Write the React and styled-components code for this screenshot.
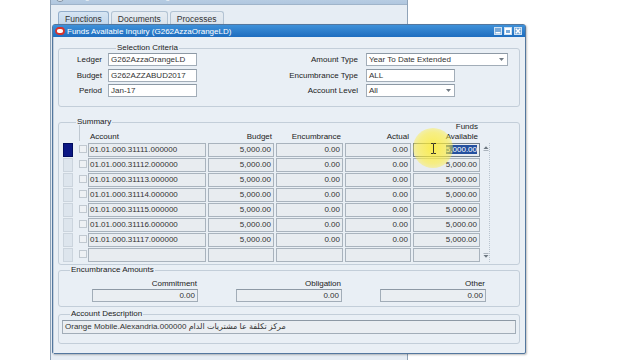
import React from "react";
import styled, { createGlobalStyle } from "styled-components";

const GlobalStyle = createGlobalStyle`
  html, body {
    margin: 0;
    padding: 0;
    background: #fff;
  }
  body {
    font-family: "Liberation Sans", "DejaVu Sans", Arial, sans-serif;
  }
`;

const accounts = [
  "01.01.000.31111.000000",
  "01.01.000.31112.000000",
  "01.01.000.31113.000000",
  "01.01.000.31114.000000",
  "01.01.000.31115.000000",
  "01.01.000.31116.000000",
  "01.01.000.31117.000000",
  "",
];

const App = () => {
  return (
    <>
      <GlobalStyle />
      <Desktop>
        <BackWindow>
          <BackTitleBar>
            <BackTitleIcon />
            <BackTitleText>Navigator - G262AzzaOrangeLD Admin</BackTitleText>
          </BackTitleBar>
          <Tabs>
            <Tab $active>Functions</Tab>
            <Tab>Documents</Tab>
            <Tab>Processes</Tab>
          </Tabs>
        </BackWindow>

        <FrontWindow>
          <TitleBar>
            <svg width="10" height="8" viewBox="0 0 10 8">
              <rect x="1" y="1" width="8" height="6" rx="3" fill="#fff" stroke="#d8322b" strokeWidth="1.8" />
            </svg>
            <TitleText>Funds Available Inquiry (G262AzzaOrangeLD)</TitleText>
            <WinButtons>
              <WinButton>
                <svg width="6" height="6" viewBox="0 0 6 6">
                  <rect x="0.5" y="4" width="5" height="1.5" fill="#fff" />
                </svg>
              </WinButton>
              <WinButton>
                <svg width="6" height="6" viewBox="0 0 6 6">
                  <rect x="0.5" y="0.5" width="5" height="5" fill="none" stroke="#fff" strokeWidth="1" />
                  <rect x="0.5" y="0.5" width="5" height="1.5" fill="#fff" />
                </svg>
              </WinButton>
              <WinButton>
                <svg width="6" height="6" viewBox="0 0 6 6">
                  <path d="M0.8 0.8 L5.2 5.2 M5.2 0.8 L0.8 5.2" stroke="#fff" strokeWidth="1.4" />
                </svg>
              </WinButton>
            </WinButtons>
          </TitleBar>

          <Body>
            <Panel>
              <Legend $x={57}>Selection Criteria</Legend>
              <CriteriaContent>
                <FieldGrid $cols="43px 89px" $gap={6}>
                  <Label>Ledger</Label>
                  <Input>G262AzzaOrangeLD</Input>
                  <Label>Budget</Label>
                  <Input>G262AZZABUD2017</Input>
                  <Label>Period</Label>
                  <Input>Jan-17</Input>
                </FieldGrid>
                <FieldGrid $cols="auto 142px" $gap={8}>
                  <Label>Amount Type</Label>
                  <Select $w={142}>
                    <span>Year To Date Extended</span>
                    <Arrow />
                  </Select>
                  <Label>Encumbrance Type</Label>
                  <Input $w={89}>ALL</Input>
                  <Label>Account Level</Label>
                  <Select $w={89}>
                    <span>All</span>
                    <Arrow />
                  </Select>
                </FieldGrid>
              </CriteriaContent>
            </Panel>

            <Panel $mt={10}>
              <Legend $x={17}>Summary</Legend>
              <SummaryContent>
                <Rows>
                  <HeaderRow>
                    <span />
                    <HeadMark />
                    <Head $left>Account</Head>
                    <Head>Budget</Head>
                    <Head>Encumbrance</Head>
                    <Head>Actual</Head>
                    <Head>
                      Funds
                      <br />
                      Available
                    </Head>
                  </HeaderRow>
                  {accounts.map((acc, i) => (
                    <Row key={i}>
                      <Indicator $active={i === 0} />
                      <Check />
                      <Cell $left>{acc}</Cell>
                      <Cell>{acc && "5,000.00"}</Cell>
                      <Cell>{acc && "0.00"}</Cell>
                      <Cell>{acc && "0.00"}</Cell>
                      <Cell $focus={i === 0}>
                        {i === 0 ? <Selected>5,000.00</Selected> : acc && "5,000.00"}
                      </Cell>
                    </Row>
                  ))}
                </Rows>
                <Scrollbar>
                  <svg width="6" height="6" viewBox="0 0 6 6">
                    <path d="M0.5 4 L3 1.2 L5.5 4 Z" fill="#6c7680" />
                    <rect x="0.5" y="5" width="5" height="0.8" fill="#9aa4ae" />
                  </svg>
                  <svg width="6" height="6" viewBox="0 0 6 6">
                    <rect x="0.5" y="0.2" width="5" height="0.8" fill="#9aa4ae" />
                    <path d="M0.5 2 L3 4.8 L5.5 2 Z" fill="#6c7680" />
                  </svg>
                </Scrollbar>
              </SummaryContent>
            </Panel>

            <Panel>
              <Legend $x={11}>Encumbrance Amounts</Legend>
              <AmountsContent>
                <AmountCol>
                  <AmountLabel>Commitment</AmountLabel>
                  <Input $readonly $right>0.00</Input>
                </AmountCol>
                <AmountCol>
                  <AmountLabel>Obligation</AmountLabel>
                  <Input $readonly $right>0.00</Input>
                </AmountCol>
                <AmountCol>
                  <AmountLabel>Other</AmountLabel>
                  <Input $readonly $right>0.00</Input>
                </AmountCol>
              </AmountsContent>
            </Panel>

            <Panel $mt={2}>
              <Legend $x={11}>Account Description</Legend>
              <DescContent>
                <Input $readonly $h={14}>
                  Orange Mobile.Alexandria.000000 مركز تكلفة عا مشتريات الدام
                </Input>
              </DescContent>
            </Panel>
          </Body>
        </FrontWindow>

        <CursorGlow>
          <svg width="7" height="11" viewBox="0 0 7 11">
            <path d="M1 0.5 H3 Q3.5 0.5 3.5 1.5 V9.5 Q3.5 10.5 3 10.5 H1 M6 0.5 H4 Q3.5 0.5 3.5 1.5 M3.5 9.5 Q3.5 10.5 4 10.5 H6" stroke="#222" strokeWidth="0.9" fill="none" />
          </svg>
        </CursorGlow>
      </Desktop>
    </>
  );
};

// styled components

const Desktop = styled.div`
  position: relative;
  width: 640px;
  height: 360px;
  overflow: hidden;
  background: #fff;
  font-size: 8px;
  color: #222;
`;

const BackWindow = styled.div`
  position: absolute;
  left: 50px;
  top: -12px;
  width: 358px;
  height: 376px;
  box-sizing: border-box;
  border: 1px solid #8fa3b8;
  background: #e6edf4;
`;

const BackTitleBar = styled.div`
  height: 15px;
  display: flex;
  align-items: center;
  gap: 4px;
  padding: 0 4px;
  background: linear-gradient(#c8d9ea, #b0c7df);
  border-bottom: 1px solid #9fb4ca;
`;

const BackTitleIcon = styled.div`
  width: 8px;
  height: 8px;
  border-radius: 50%;
  border: 1px solid #7f8f9f;
  background: #dfe7ef;
`;

const BackTitleText = styled.div`
  font-size: 8px;
  color: #eef3f8;
`;

const Tabs = styled.div`
  display: flex;
  gap: 2px;
  padding: 6px 0 0 7px;
`;

const Tab = styled.div`
  height: 16px;
  padding: 0 6px;
  font-size: 8.5px;
  line-height: 15px;
  color: #333;
  border: 1px solid ${(p) => (p.$active ? "#93aecb" : "#b3c3d3")};
  border-bottom: none;
  border-radius: 3px 3px 0 0;
  background: ${(p) =>
    p.$active ? "linear-gradient(#d6e5f3, #bcd2e8)" : "linear-gradient(#e6ecf2, #d8e1ea)"};
`;

const FrontWindow = styled.div`
  position: absolute;
  left: 52px;
  top: 24px;
  width: 474px;
  height: 330px;
  box-sizing: border-box;
  display: flex;
  flex-direction: column;
  border: 1px solid #53779e;
  border-radius: 3px 3px 2px 2px;
  background: #e9eff5;
  box-shadow: 1px 1px 2px rgba(0, 0, 0, 0.25);
`;

const TitleBar = styled.div`
  height: 12px;
  flex: none;
  display: flex;
  align-items: center;
  gap: 2px;
  padding: 0 3px 0 2px;
  background: linear-gradient(#3f91d9, #1e6dbf);
`;

const TitleText = styled.div`
  font-size: 8px;
  color: #fff;
  white-space: nowrap;
`;

const WinButtons = styled.div`
  margin-left: auto;
  display: flex;
  gap: 2px;
`;

const WinButton = styled.div`
  width: 8px;
  height: 8px;
  box-sizing: border-box;
  display: flex;
  align-items: center;
  justify-content: center;
  border: 1px solid #cfe1f2;
  background: #79a9d8;
`;

const Body = styled.div`
  flex: 1;
  display: flex;
  flex-direction: column;
  padding: 6px 5px 10px;
  box-shadow: inset 1px 0 0 #c2cedb;
`;

const Panel = styled.fieldset`
  margin: ${(p) => p.$mt || 0}px 0 0;
  padding: 0;
  min-width: 0;
  border: 1px solid #c3ced9;
  border-radius: 3px;
`;

const Legend = styled.legend`
  margin-left: ${(p) => p.$x}px;
  padding: 0 1px;
  font-size: 8px;
  line-height: 10px;
  color: #222;
`;

const CriteriaContent = styled.div`
  display: flex;
  justify-content: space-between;
  padding: 0 11px 9px 0;
`;

const FieldGrid = styled.div`
  display: grid;
  grid-template-columns: ${(p) => p.$cols};
  column-gap: ${(p) => p.$gap}px;
  row-gap: 2.5px;
  align-items: center;
  justify-items: start;
`;

const Label = styled.div`
  justify-self: end;
  font-size: 8px;
  color: #222;
  white-space: nowrap;
`;

const Input = styled.div`
  width: ${(p) => (p.$w ? `${p.$w}px` : "100%")};
  height: ${(p) => p.$h || 13}px;
  box-sizing: border-box;
  padding: 0 2px;
  border: 1px solid #a2adb8;
  border-top-color: #8d99a5;
  background: ${(p) => (p.$readonly ? "#eaeef2" : "#fff")};
  font-size: 8px;
  line-height: ${(p) => (p.$h || 13) - 2}px;
  color: #333;
  text-align: ${(p) => (p.$right ? "right" : "left")};
  white-space: nowrap;
  overflow: hidden;
`;

const Select = styled.div`
  width: ${(p) => p.$w}px;
  height: 13px;
  box-sizing: border-box;
  display: flex;
  align-items: center;
  justify-content: space-between;
  padding: 0 3px 0 2px;
  border: 1px solid #a2adb8;
  border-top-color: #8d99a5;
  background: #fff;
  font-size: 8px;
  color: #333;
  white-space: nowrap;
`;

const Arrow = () => (
  <svg width="5" height="3" viewBox="0 0 5 3">
    <path d="M0 0 H5 L2.5 3 Z" fill="#707a84" />
  </svg>
);

const SummaryContent = styled.div`
  display: flex;
  align-items: flex-end;
  padding: 0 0 2px 4px;
`;

const Rows = styled.div`
  display: flex;
  flex-direction: column;
  gap: 1px;
`;

const grid = `
  display: grid;
  grid-template-columns: 16px 9px 120px 68px 69px 68px 69px;
`;

const HeaderRow = styled.div`
  ${grid}
  height: 21px;
  margin-top: -6px;
  align-items: end;
`;

const HeadMark = styled.div`
  align-self: stretch;
  margin: 4px 0 1px 0;
  border-left: 1px solid #bfc8d1;
`;

const Head = styled.div`
  margin-right: 2px;
  padding: ${(p) => (p.$left ? "0 0 0 2px" : "0 2px 0 0")};
  font-size: 8px;
  line-height: 10px;
  color: #222;
  text-align: ${(p) => (p.$left ? "left" : "right")};
`;

const Row = styled.div`
  ${grid}
  height: 14px;
`;

const Indicator = styled.div`
  width: 10px;
  height: 14px;
  box-sizing: border-box;
  border: 1px solid ${(p) => (p.$active ? "#000c5e" : "#cbd4dd")};
  background: ${(p) => (p.$active ? "#0b1784" : "#dde5ed")};
`;

const Check = styled.div`
  width: 6px;
  height: 6px;
  margin-top: 2px;
  border: 1px solid #c0c8d0;
  background: #eef1f4;
`;

const Cell = styled.div`
  height: 14px;
  box-sizing: border-box;
  margin-right: 2px;
  padding: ${(p) => (p.$left ? "0 0 0 1px" : "0 2px 0 0")};
  border: 1px solid ${(p) => (p.$focus ? "#6f7d8b" : "#a9b3bd")};
  background: #e8ecf0;
  font-size: 8px;
  line-height: 12px;
  color: #333;
  text-align: ${(p) => (p.$left ? "left" : "right")};
  white-space: nowrap;
  overflow: hidden;
`;

const Selected = styled.span`
  background: #24509f;
  color: #fff;
`;

const Scrollbar = styled.div`
  width: 8px;
  height: 119px;
  box-sizing: border-box;
  display: flex;
  flex-direction: column;
  justify-content: space-between;
  align-items: center;
  padding: 2px 0 3px;
  border-right: 1px dotted #b9c4cf;
`;

const AmountsContent = styled.div`
  display: grid;
  grid-template-columns: repeat(3, 106px);
  column-gap: 38px;
  padding: 4px 0 4px 33px;
`;

const AmountCol = styled.div`
  display: flex;
  flex-direction: column;
`;

const AmountLabel = styled.div`
  padding-right: 1px;
  font-size: 8px;
  line-height: 10px;
  color: #222;
  text-align: right;
`;

const DescContent = styled.div`
  padding: 1px 3px 9px;
`;

const CursorGlow = styled.div`
  position: absolute;
  left: 413px;
  top: 128px;
  width: 40px;
  height: 40px;
  display: flex;
  align-items: center;
  justify-content: center;
  border-radius: 50%;
  background: radial-gradient(
    circle,
    rgba(255, 236, 40, 0.8) 0%,
    rgba(255, 238, 60, 0.6) 55%,
    rgba(255, 240, 80, 0) 100%
  );
`;

export default App;
